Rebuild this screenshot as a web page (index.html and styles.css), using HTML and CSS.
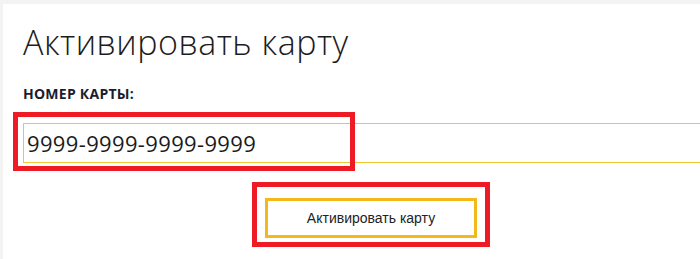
FILE: index.html
```html
<!DOCTYPE html>
<html lang="ru">
<head>
<meta charset="utf-8">
<title>Активировать карту</title>
<link rel="stylesheet" href="styles.css">
</head>
<body>
<main class="panel">
  <h1 class="title">Активировать карту</h1>
  <form class="form">
    <label class="label" for="card">НОМЕР КАРТЫ:</label>
    <div class="field">
      <input class="input" id="card" type="text" value="9999-9999-9999-9999">
      <span class="mark mark-input"></span>
    </div>
    <div class="actions">
      <div class="btn-wrap">
        <button class="btn" type="button">Активировать карту</button>
        <span class="mark mark-btn"></span>
      </div>
    </div>
  </form>
</main>
</body>
</html>
```
FILE: styles.css
```css
html, body {
  margin: 0;
  padding: 0;
  overflow: hidden;
}
body {
  background: #f3f3f3;
  width: 700px;
  height: 259px;
}
.panel {
  margin: 4px 0 0 3px;
  background: #ffffff;
  height: 255px;
  padding: 0 0 0 20px;
  box-sizing: border-box;
}
.title {
  margin: 0;
  padding-top: 16px;
  font-family: "Open Sans", sans-serif;
  font-weight: 300;
  font-size: 34px;
  letter-spacing: 0.5px;
  line-height: 44px;
  color: #1c1c1c;
  white-space: nowrap;
}
.form {
  width: 696px;
  display: flex;
  flex-direction: column;
}
.label {
  margin-top: 20px;
  font-family: "Open Sans", sans-serif;
  font-weight: 700;
  font-size: 14px;
  letter-spacing: 0.25px;
  line-height: 20px;
  color: #1b1d2e;
}
.field {
  position: relative;
  margin-top: 19px;
}
.input {
  display: block;
  width: 100%;
  height: 40px;
  box-sizing: border-box;
  border: 1px solid #f1c832;
  background: #ffffff;
  padding: 0 0 1px 3px;
  font-family: "Open Sans", sans-serif;
  font-size: 22px;
  letter-spacing: 0.35px;
  color: #1a1a1a;
  outline: none;
}
.actions {
  display: flex;
  justify-content: center;
  margin-top: 35px;
}
.btn-wrap {
  position: relative;
}
.btn {
  display: block;
  width: 212px;
  height: 40px;
  border: 3px solid #f4b81a;
  background: #ffffff;
  font-family: "Liberation Sans", Arial, sans-serif;
  font-size: 14px;
  color: #222222;
  padding: 0;
}
.mark {
  position: absolute;
  border: 5px solid #ee1b24;
  box-sizing: border-box;
  pointer-events: none;
}
.mark-input {
  left: -10px;
  top: -11px;
  width: 342px;
  height: 59px;
}
.mark-btn {
  left: -13px;
  right: -13px;
  top: -16px;
  bottom: -9px;
}
```
